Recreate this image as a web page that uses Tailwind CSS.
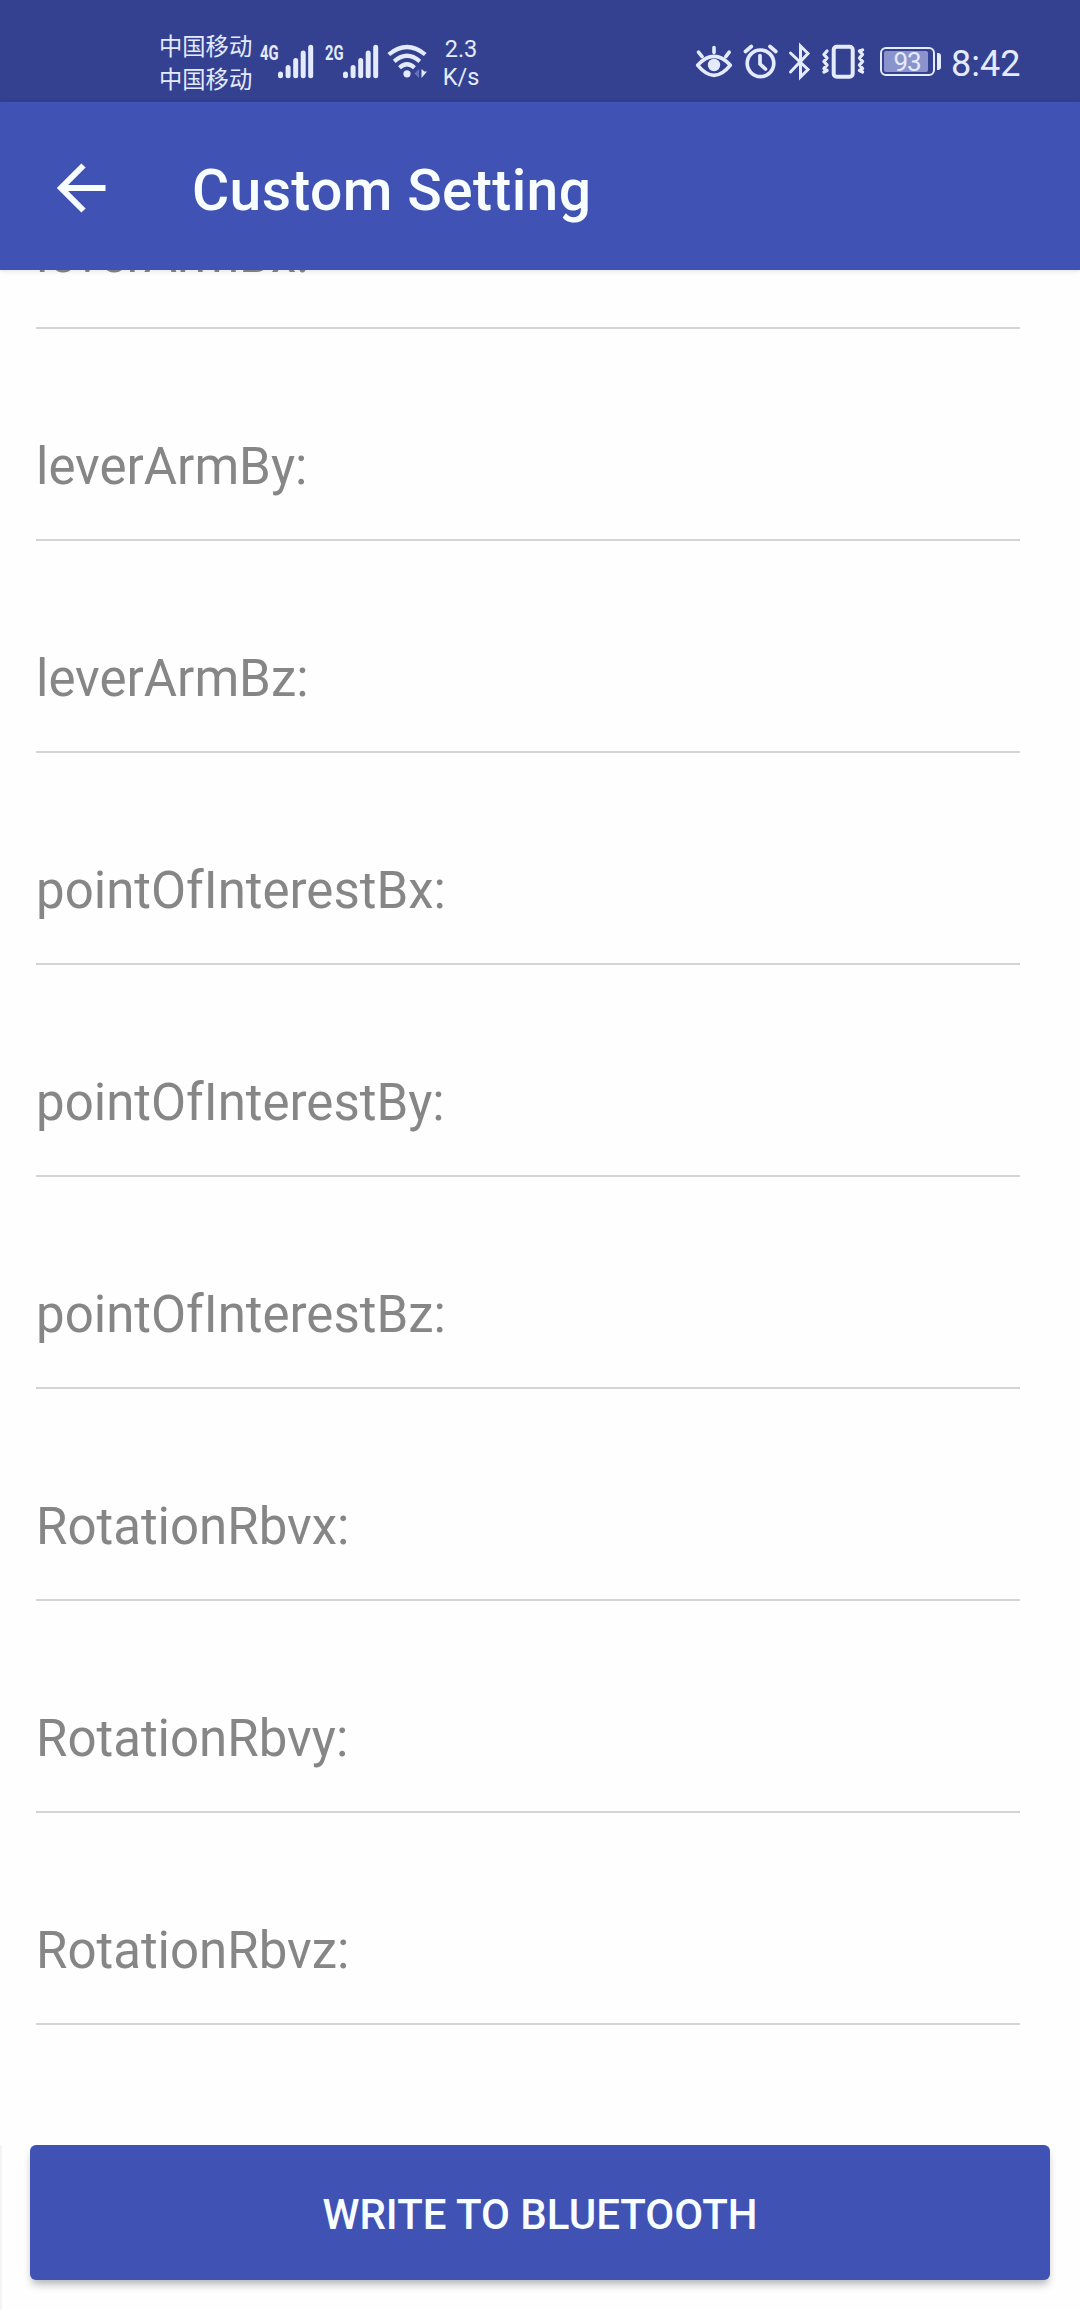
<!DOCTYPE html>
<html lang="en">
<head>
<meta charset="utf-8">
<title>Custom Setting</title>
<script src="https://cdn.jsdelivr.net/npm/@tailwindcss/browser@4"></script>
</head>
<body class="w-[1080px] h-[2310px] overflow-hidden bg-[#fefefe] font-['Roboto','Noto_Sans_CJK_SC',sans-serif] flex flex-col">
  <!-- Status bar -->
  <div class="h-[102px] shrink-0 bg-[#344090] text-[#e4ebfe] flex items-start justify-between pl-[159px] pr-[60px]">
    <div class="flex items-start">
      <div class="w-[94px] pt-[29px] text-[23.3px] leading-[33px] whitespace-nowrap font-['Noto_Sans_CJK_SC',sans-serif]">
        <div>中国移动</div><div>中国移动</div>
      </div>
      <div class="ml-[7px] mt-[42px] w-[18px] text-[20px] leading-[22px] font-bold"><span class="inline-block origin-left scale-x-[0.74]">4G</span></div>
      <svg class="mt-[42px] w-9 h-10" viewBox="278 42 36 40" fill="none" stroke="currentColor" stroke-width="5" stroke-linecap="round"><path d="M280.5 74v1.8M288.1 67.5v8.3M295.7 60.5v15.3M303.2 53v22.8M310.7 47.3v28.5"/></svg>
      <div class="ml-[11px] mt-[42px] w-[18px] text-[20px] leading-[22px] font-bold"><span class="inline-block origin-left scale-x-[0.74]">2G</span></div>
      <svg class="mt-[42px] w-9 h-10" viewBox="278 42 36 40" fill="none" stroke="currentColor" stroke-width="5" stroke-linecap="round"><path d="M280.5 74v1.8M288.1 67.5v8.3M295.7 60.5v15.3M303.2 53v22.8M310.7 47.3v28.5"/></svg>
      <svg class="ml-[6px] mt-[42px] w-11 h-10" viewBox="385 42 44 40" fill="none" stroke="currentColor" stroke-width="4.2">
        <path d="M388.8 54.5Q407 39.500 425.200 54.500M394.200 61.300Q407 50.300 419.800 61.300M399.500 67.800Q407 60.800 414.500 67.800"/>
        <circle cx="407" cy="73.800" r="3.600" fill="currentColor" stroke="none"/>
        <path d="M419 69v9l-4.500-4.500z" fill="#6672bd" stroke="none"/>
        <path d="M421.500 69v9l5.500-6.500h-2.500z" fill="currentColor" stroke="none"/>
      </svg>
      <div class="ml-[10px] w-[44px] pt-[35px] text-center text-[23.5px] leading-[28px]"><div>2.3</div><div>K/s</div></div>
    </div>
    <div class="flex items-start">
      <svg class="mt-[42px] w-[40px] h-10" viewBox="694 42 40 40" fill="none" stroke="currentColor" stroke-width="3.600" stroke-linecap="round">
        <path d="M697.600 65.200Q714 47.500 730.400 65.200Q714 85.500 697.600 65.200Z" stroke-linejoin="round"/>
        <path d="M714 47.500v5M698.500 52.200l3.600 4.500M729.200 52.200l-3.400 4.500"/>
        <circle cx="714" cy="65" r="6.200" fill="currentColor" stroke="none"/>
      </svg>
      <svg class="ml-2 mt-[42px] w-[38px] h-10" viewBox="742 42 38 40" fill="none" stroke="currentColor" stroke-width="3.700">
        <circle cx="760.500" cy="63.300" r="13.300"/>
        <path d="M760 55.500v8.500l5.500 5" stroke-linecap="round"/>
        <path d="M745.500 51.500l5.800-5M775.800 51.500l-5.800-5" stroke-linecap="round"/>
      </svg>
      <svg class="ml-[7px] mt-[42px] w-[25px] h-10" viewBox="787 42 25 40" fill="none" stroke="currentColor" stroke-width="3" stroke-linecap="round"><path d="M790.500 53l17.500 16.500-7.500 7.500v-31l7.500 7.500-17.500 18.500"/></svg>
      <svg class="ml-[8px] mt-[42px] w-[46px] h-10" viewBox="820 42 46 40" fill="none" stroke="currentColor" stroke-linejoin="round" stroke-linecap="round">
        <rect x="833.700" y="46.700" width="19" height="30" rx="3" stroke-width="4"/>
        <path d="M827 51l-3 3.500 3 3.500-3 3.500 3 3.500-3 3.500 3 2-3 1.500M859.500 51l3-1M859.500 51l3 3.500-3 3.500 3 3.500-3 3.500 3 3.500-3 2 3 1.500" stroke-width="3.400"/>
      </svg>
      <div class="relative ml-[14px] mt-[47px] w-[55px] h-[29px] border-2 border-current rounded-[6px] p-[2px]">
        <div class="w-[44px] h-[21px] bg-[#8b93cc] rounded-[2px]"></div>
        <div class="absolute inset-y-0 left-0 w-[50px] text-center text-[26px] leading-[26px] tracking-[-1px]">93</div>
      </div>
      <div class="ml-[2px] mt-[53px] w-[4px] h-[17px] rounded-r-[3px] bg-current"></div>
      <div class="ml-[10px] mt-[43px] w-[69px] text-[36px] leading-[42px] whitespace-nowrap">8:42</div>
    </div>
  </div>

  <!-- App bar -->
  <header class="h-[168px] shrink-0 bg-[#4152b5] text-[#f8fdff] flex items-center pl-[56px] relative z-10 shadow-[0_1px_5px_rgba(0,20,40,0.12)]">
    <svg class="w-[50px] h-[50px] mt-[4px]" viewBox="0 0 50 50" fill="none" stroke="currentColor" stroke-width="6"><path d="M49.500 25H5M27.500 2.500L5 25l22.500 22.500"/></svg>
    <h1 class="ml-[86px] mt-[10px] text-[57px] leading-[68px] tracking-[0.36px] font-medium whitespace-nowrap">Custom Setting</h1>
  </header>

  <!-- Field list, scrolled so the first row sits partly under the app bar -->
  <main class="grow min-h-0">
    <div class="-mt-[153px] pl-[36px] pr-[60px] text-[51px] leading-[60px] text-[#868686]">
      <div class="h-[212px] border-b-2 border-[#d4d4d4] pt-[108px]">leverArmBx:</div>
      <div class="h-[212px] border-b-2 border-[#d4d4d4] pt-[108px]">leverArmBy:</div>
      <div class="h-[212px] border-b-2 border-[#d4d4d4] pt-[108px]">leverArmBz:</div>
      <div class="h-[212px] border-b-2 border-[#d4d4d4] pt-[108px]">pointOfInterestBx:</div>
      <div class="h-[212px] border-b-2 border-[#d4d4d4] pt-[108px]">pointOfInterestBy:</div>
      <div class="h-[212px] border-b-2 border-[#d4d4d4] pt-[108px]">pointOfInterestBz:</div>
      <div class="h-[212px] border-b-2 border-[#d4d4d4] pt-[108px]">RotationRbvx:</div>
      <div class="h-[212px] border-b-2 border-[#d4d4d4] pt-[108px]">RotationRbvy:</div>
      <div class="h-[212px] border-b-2 border-[#d4d4d4] pt-[108px]">RotationRbvz:</div>
    </div>
  </main>

  <footer class="h-[165px] shrink-0 pl-[28px] border-l-2 border-[#f4f4f4]">
    <button class="block w-[1020px] h-[135px] rounded-[6px] bg-[#4152b5] text-[#f8fdff] text-[42px] leading-[50px] font-medium pt-[4px] whitespace-nowrap shadow-[0_6px_8px_-2px_rgba(0,0,0,0.3)]">WRITE TO BLUETOOTH</button>
  </footer>
</body>
</html>
